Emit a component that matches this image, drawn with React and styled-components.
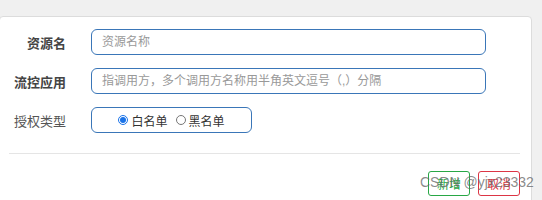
import React from 'react';
import styled, { createGlobalStyle } from 'styled-components';

const GlobalStyle = createGlobalStyle`
  html, body {
    margin: 0;
    padding: 0;
    background: #f0f0f0;
    font-family: "Liberation Sans", "Noto Sans CJK SC", sans-serif;
  }
`;

const Page = styled.div`
  position: relative;
  height: 200px;
  overflow: hidden;
  padding-top: 16px;
  box-sizing: border-box;
`;

const Card = styled.div`
  width: 533px;
  height: 220px;
  margin-left: -1px;
  background: #fff;
  border: 1px solid #dcdcdc;
  border-radius: 4px;
  box-sizing: border-box;
  padding-top: 12px;
`;

const Form = styled.div`
  display: flex;
  flex-direction: column;
  gap: 13px;
`;

const Row = styled.div`
  display: flex;
  align-items: center;
  gap: 25px;
  padding-left: 1px;
`;

const Label = styled.label`
  width: 65px;
  text-align: right;
  font-size: 13px;
  font-weight: ${p => (p.$light ? 400 : 700)};
  color: ${p => (p.$light ? '#555' : '#444')};
`;

const Input = styled.input`
  width: 395px;
  height: 26px;
  box-sizing: border-box;
  border: 1px solid #3a76b8;
  border-radius: 6px;
  padding: 0 10px;
  font-size: 12px;
  font-family: "Liberation Sans", "Noto Sans CJK SC", sans-serif;
  outline: none;
  &::placeholder {
    color: #999;
  }
`;

const RadioBox = styled.div`
  width: 161px;
  height: 26px;
  box-sizing: border-box;
  border: 1px solid #3a76b8;
  border-radius: 6px;
  display: flex;
  align-items: center;
  justify-content: center;
  gap: 8px;
`;

const RadioLabel = styled.label`
  display: flex;
  align-items: center;
  gap: 3px;
  font-size: 12px;
  color: #333;
`;

const Radio = styled.input`
  width: 10px;
  height: 10px;
  margin: 0;
  accent-color: #1a73e8;
`;

const Divider = styled.hr`
  border: none;
  border-top: 1px solid #e5e5e5;
  margin: 20px 11px 0 9px;
`;

const Footer = styled.div`
  display: flex;
  justify-content: flex-end;
  gap: 8px;
  margin: 17px 11px 0 0;
`;

const Button = styled.button`
  width: 42px;
  height: 25px;
  box-sizing: border-box;
  background: #fff;
  border: 1px solid ${p => p.$color};
  color: ${p => p.$color};
  border-radius: 3px;
  font-size: 12px;
  font-family: "Liberation Sans", "Noto Sans CJK SC", sans-serif;
  padding: 0;
`;

const Watermark = styled.div`
  position: absolute;
  left: 420px;
  top: 174px;
  font-size: 14px;
  color: rgba(100, 100, 100, 0.75);
  font-family: "Liberation Sans", sans-serif;
  pointer-events: none;
`;

export default function App() {
  return (
    <>
      <GlobalStyle />
      <Page>
        <Card>
          <Form>
            <Row>
              <Label>资源名</Label>
              <Input placeholder="资源名称" />
            </Row>
            <Row>
              <Label>流控应用</Label>
              <Input placeholder="指调用方，多个调用方名称用半角英文逗号（,）分隔" />
            </Row>
            <Row>
              <Label $light>授权类型</Label>
              <RadioBox>
                <RadioLabel>
                  <Radio type="radio" name="type" defaultChecked />
                  白名单
                </RadioLabel>
                <RadioLabel>
                  <Radio type="radio" name="type" />
                  黑名单
                </RadioLabel>
              </RadioBox>
            </Row>
          </Form>
          <Divider />
          <Footer>
            <Button $color="#28a745">新增</Button>
            <Button $color="#dc3545">取消</Button>
          </Footer>
        </Card>
        <Watermark>CSDN @yjx23332</Watermark>
      </Page>
    </>
  );
}
